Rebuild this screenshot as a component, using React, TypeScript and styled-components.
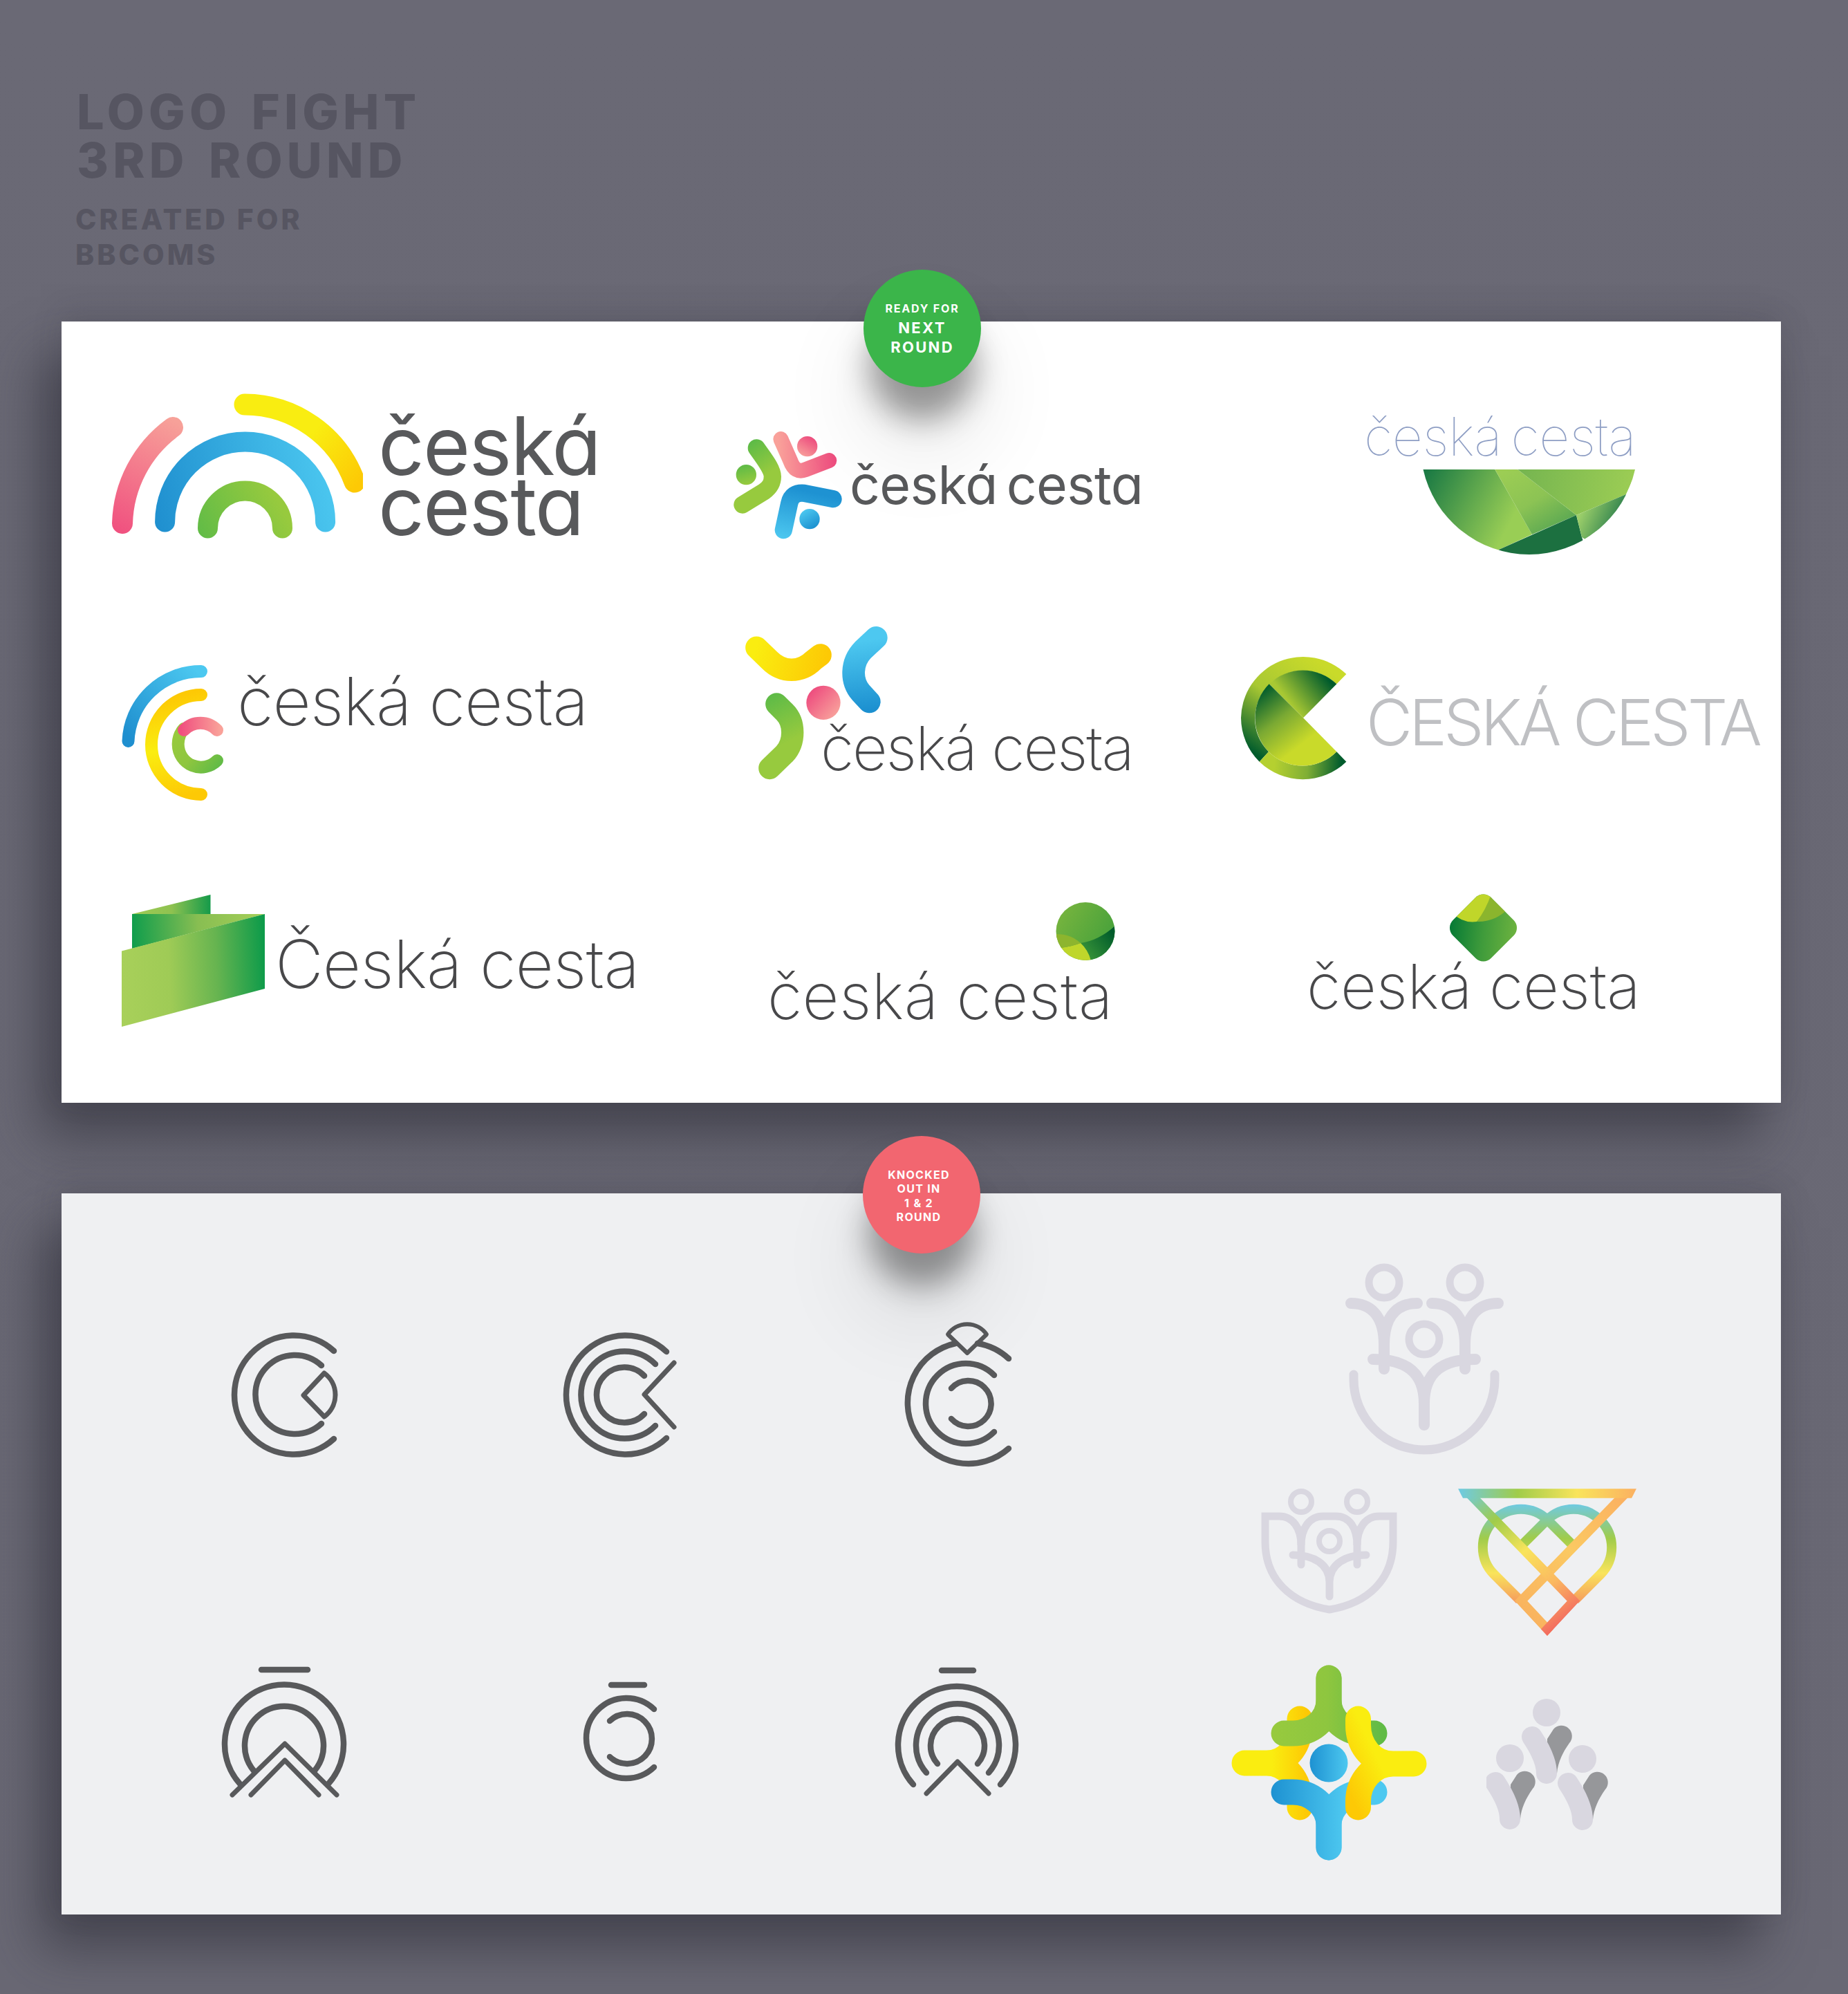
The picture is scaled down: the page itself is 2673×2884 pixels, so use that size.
import React from "react";
import styled, { createGlobalStyle } from "styled-components";

const GlobalStyle = createGlobalStyle`
  body {
    margin: 0;
    background: #696874;
    font-family: "Inter", "Liberation Sans", sans-serif;
  }
`;

const Page = styled.div`
  width: 2673px;
  height: 2884px;
  overflow: hidden;
  padding: 127px 0 0 89px;
  box-sizing: border-box;
  background: linear-gradient(180deg, #6a6975 0%, #696874 100%);
`;

const Header = styled.header`
  height: 338px;
  color: #565561;
`;

const Title = styled.h1`
  margin: 0 0 0 22px;
  font-size: 70px;
  line-height: 70px;
  font-weight: 800;
  letter-spacing: 6.2px;
  word-spacing: 8px;
`;

const Subtitle = styled.h2`
  margin: 25px 0 0 20px;
  font-size: 41px;
  line-height: 51px;
  font-weight: 800;
  letter-spacing: 4px;
`;

const Panel = styled.section<{ $tone: string; $height: number; $top: number }>`
  position: relative;
  width: 2487px;
  height: ${({ $height }) => $height}px;
  margin-top: ${({ $top }) => $top}px;
  background: ${({ $tone }) => $tone};
  box-shadow: 0 -10px 40px rgba(50, 49, 60, 0.18), -30px 50px 70px rgba(45, 44, 55, 0.58);
`;

const LogoGrid = styled.div`
  display: grid;
  grid-template-columns: 900px 760px 827px;
  grid-template-rows: 400px 370px 360px;
`;

const MarkGrid = styled.div`
  display: grid;
  grid-template-columns: 721px 459px 479px 828px;
  grid-template-rows: 660px 383px;
`;

const Cell = styled.div<{ $left: number; $top: number; $stack?: boolean }>`
  display: flex;
  flex-direction: ${({ $stack }) => ($stack ? "column" : "row")};
  align-items: flex-start;
  padding: ${({ $top, $left }) => `${$top}px 0 0 ${$left}px`};
`;

const Mark = styled.svg<{ $ml?: number; $mt?: number }>`
  display: block;
  flex-shrink: 0;
  margin: ${({ $mt = 0, $ml = 0 }) => `${$mt}px 0 0 ${$ml}px`};
`;

const Word = styled.div<{
  $size: number;
  $weight: number;
  $tone?: string;
  $ml?: number;
  $mt?: number;
  $track?: number;
  $gap?: number;
  $round?: boolean;
  $leading?: number;
}>`
  flex-shrink: 0;
  white-space: pre;
  font-family: "Inter", "Liberation Sans", sans-serif;
  font-size: ${({ $size }) => $size}px;
  font-weight: ${({ $weight }) => $weight};
  line-height: ${({ $leading, $size }) => $leading ?? $size}px;
  letter-spacing: ${({ $track = 0 }) => $track}px;
  word-spacing: ${({ $gap = 0 }) => $gap}px;
  color: ${({ $tone = "#48484a" }) => $tone};
  margin: ${({ $mt = 0, $ml = 0 }) => `${$mt}px 0 0 ${$ml}px`};
  font-feature-settings: ${({ $round }) => ($round ? '"cv11" 1' : "normal")};
`;

const RightColumn = styled.div`
  grid-column: 4;
  grid-row: 1 / span 2;
  display: flex;
  flex-direction: column;
`;

const MarkRow = styled.div<{ $top: number }>`
  display: flex;
  align-items: flex-start;
  margin-top: ${({ $top }) => $top}px;
`;

const Badge = styled.div<{
  $tone: string;
  $left: number;
  $top: number;
  $leading: number;
  $shift?: number;
  $above?: number;
  $below?: number;
  $track: number;
}>`
  position: absolute;
  left: ${({ $left }) => $left}px;
  top: ${({ $top }) => $top}px;
  width: 170px;
  height: 170px;
  box-sizing: border-box;
  padding: ${({ $above = 0, $below = 0, $shift = 0 }) => `${$above}px ${$shift}px ${$below}px 0`};
  border-radius: 50%;
  background: ${({ $tone }) => $tone};
  color: #fff;
  display: flex;
  flex-direction: column;
  align-items: center;
  justify-content: center;
  font-size: 16px;
  font-weight: 700;
  letter-spacing: ${({ $track }) => $track}px;
  line-height: ${({ $leading }) => $leading}px;
  box-shadow: 0 55px 45px -8px rgba(0, 0, 0, 0.38), 0 90px 120px 15px rgba(0, 0, 0, 0.08);
`;

const BadgeStrong = styled.span`
  font-size: 22px;
  letter-spacing: 2.3px;
`;

const Path = styled.path<{ $w: number; $c: string }>`
  fill: none;
  stroke: ${({ $c }) => $c};
  stroke-width: ${({ $w }) => $w};
  stroke-linecap: round;
  stroke-linejoin: round;
`;

const ButtPath = styled.path<{ $w: number; $c: string }>`
  fill: none;
  stroke: ${({ $c }) => $c};
  stroke-width: ${({ $w }) => $w};
  stroke-linejoin: miter;
`;

type GradProps = { id: string; x1: number; y1: number; x2: number; y2: number; stops: string[] };

const Grad = ({ id, x1, y1, x2, y2, stops }: GradProps) => (
  <linearGradient id={id} gradientUnits="userSpaceOnUse" x1={x1} y1={y1} x2={x2} y2={y2}>
    {stops.map((c, i) => (
      <stop key={i} offset={stops.length === 1 ? 0 : i / (stops.length - 1)} stopColor={c} />
    ))}
  </linearGradient>
);

const ink = "#58595b";
const lilac = "#d9d7e0";

const RainbowMark = () => (
  <Mark viewBox="155 560 370 230" width={370} height={230}>
    <defs>
      <Grad id="rb-pink" x1={170} y1={770} x2={255} y2={610} stops={["#f0507f", "#f7a199"]} />
      <Grad id="rb-yellow" x1={360} y1={580} x2={510} y2={710} stops={["#f9ed11", "#f9ed11", "#fdc905"]} />
      <Grad id="rb-blue" x1={225} y1={760} x2={486} y2={700} stops={["#1f8fcf", "#4cc8f0"]} />
      <Grad id="rb-green" x1={286} y1={780} x2={400} y2={720} stops={["#5fbb47", "#97ca3e"]} />
    </defs>
    <Path $w={30} $c="url(#rb-pink)" d="M177 757 A178 178 0 0 1 250 618" />
    <Path $w={31} $c="url(#rb-yellow)" d="M354 585 A170 170 0 0 1 513 697" />
    <Path $w={29} $c="url(#rb-blue)" d="M238.6 755 A116 116 0 0 1 470.6 755" />
    <Path $w={29} $c="url(#rb-green)" d="M300.5 764 A54 54 0 0 1 408.5 764" />
  </Mark>
);

const PeopleMark = () => (
  <Mark viewBox="0 0 540 540" width={180} height={180}>
    <defs>
      <Grad id="pm-pink" x1={230} y1={180} x2={470} y2={170} stops={["#f9a19a", "#ee4e7f"]} />
      <Grad id="pm-pinkdot" x1={375} y1={70} x2={330} y2={150} stops={["#ee4e7f", "#f8a09b"]} />
      <Grad id="pm-green" x1={110} y1={90} x2={190} y2={220} stops={["#5ebb47", "#97ca3e"]} />
      <Grad id="pm-greendot" x1={80} y1={190} x2={100} y2={270} stops={["#60bb46", "#97ca3e"]} />
      <Grad id="pm-blue" x1={300} y1={290} x2={250} y2={510} stops={["#1e92d2", "#4dc8f0"]} />
      <Grad id="pm-bluedot" x1={340} y1={385} x2={385} y2={460} stops={["#4bc6ef", "#1c91d0"]} />
    </defs>
    <Path $w={66} $c="url(#pm-pink)" d="M238 75 L280 170 Q300 225 345 208 L448 168" />
    <circle cx={353} cy={107} r={44} fill="url(#pm-pinkdot)" />
    <Path $w={76} $c="url(#pm-green)" d="M133 114 C165 160 202 205 202 238 C202 268 190 285 165 303 L72 360" />
    <circle cx={88} cy={230} r={44} fill="url(#pm-greendot)" />
    <Path $w={76} $c="url(#pm-blue)" d="M250 470 L275 355 Q285 305 340 310 L465 335" />
    <circle cx={363} cy={422} r={44} fill="url(#pm-bluedot)" />
  </Mark>
);

const LeafMark = () => (
  <Mark viewBox="2055 675 315 130" width={315} height={130} $ml={82} $mt={5}>
    <defs>
      <clipPath id="leaf-clip">
        <path d="M2058.5 679 A157 157 0 0 0 2365 679 Z" />
      </clipPath>
      <Grad id="leaf-a" x1={2065} y1={680} x2={2190} y2={745} stops={["#1b7a44", "#99ce55"]} />
      <Grad id="leaf-b" x1={2180} y1={680} x2={2240} y2={780} stops={["#9ccd54", "#8cc354", "#55a552"]} />
      <Grad id="leaf-c" x1={2190} y1={690} x2={2360} y2={720} stops={["#74b450", "#9ccd54"]} />
      <Grad id="leaf-e" x1={2285} y1={745} x2={2340} y2={770} stops={["#9ccf6a", "#22784a"]} />
    </defs>
    <g clipPath="url(#leaf-clip)">
      <polygon points="2050,675 2160,675 2216,773 2168,795 2168,810 2050,810" fill="url(#leaf-a)" />
      <polygon points="2160,675 2190,675 2280,745 2216,773" fill="url(#leaf-b)" />
      <polygon points="2190,675 2370,675 2352,715 2280,745" fill="url(#leaf-c)" />
      <polygon points="2280,745 2168,795 2168,810 2300,810 2288,777" fill="#1c7040" />
      <polygon points="2280,745 2352,715 2340,810 2288,777" fill="url(#leaf-e)" />
    </g>
  </Mark>
);

const RingsMark = () => (
  <Mark viewBox="170 960 160 200" width={160} height={200}>
    <defs>
      <Grad id="ri-blue" x1={190} y1={1070} x2={290} y2={975} stops={["#1f8fcf", "#4cc8f0"]} />
      <Grad id="ri-yellow" x1={240} y1={1010} x2={270} y2={1150} stops={["#fdc905", "#faed10", "#fdc905"]} />
      <Grad id="ri-green" x1={255} y1={1060} x2={315} y2={1110} stops={["#97ca3e", "#8fc63f", "#62bb46"]} />
      <Grad id="ri-pink" x1={262} y1={1050} x2={318} y2={1050} stops={["#f0507f", "#f9a199"]} />
    </defs>
    <Path $w={18} $c="url(#ri-blue)" d="M185.5 1072 A105 105 0 0 1 291 971" />
    <Path $w={18} $c="url(#ri-yellow)" d="M291 1005 A72 72 0 0 0 291 1149" />
    <Path $w={18} $c="url(#ri-green)" d="M266 1054 A33 33 0 0 0 257.7 1077 A33 33 0 0 0 314 1100" />
    <Path $w={18} $c="url(#ri-pink)" d="M266 1056 A33 33 0 0 1 314 1056" />
  </Mark>
);

const BlobsMark = () => (
  <Mark viewBox="0 0 720 720" width={240} height={240}>
    <defs>
      <Grad id="bl-yellow" x1={100} y1={140} x2={400} y2={220} stops={["#faed10", "#fdc905"]} />
      <Grad id="bl-blue" x1={560} y1={110} x2={600} y2={410} stops={["#4dc8f0", "#1c90d0"]} />
      <Grad id="bl-green" x1={170} y1={350} x2={260} y2={540} stops={["#5fbb47", "#97ca3e"]} />
      <Grad id="bl-pink" x1={340} y1={330} x2={450} y2={430} stops={["#ee4e7f", "#f8a09b"]} />
    </defs>
    <Path $w={97} $c="url(#bl-yellow)" d="M103 140 L160 195 C215 250 295 250 350 195 L380 172" />
    <Path $w={98} $c="url(#bl-blue)" d="M622 97 L565 150 C512 205 512 285 555 335 L592 375" />
    <Path $w={97} $c="url(#bl-green)" d="M190 385 L225 420 C270 465 270 550 225 600 L160 663" />
    <circle cx={393} cy={379} r={74} fill="url(#bl-pink)" />
  </Mark>
);

const PacmanMark = () => (
  <Mark viewBox="0 0 600 600" width={200} height={200}>
    <defs>
      <Grad id="pc-ring" x1={380} y1={80} x2={90} y2={470} stops={["#c9da2a", "#a8c833", "#005b2c"]} />
      <Grad id="pc-foot" x1={190} y1={520} x2={480} y2={540} stops={["#b5d030", "#7fae35", "#005b2c"]} />
      <Grad id="pc-top" x1={250} y1={250} x2={400} y2={130} stops={["#a8c833", "#005b2c"]} />
      <Grad id="pc-low" x1={140} y1={200} x2={320} y2={430} stops={["#005b2c", "#7aa933", "#c9da2a"]} />
    </defs>
    <path d="M502 135 A270 270 0 0 0 45 325 A270 270 0 0 0 125 515 L165 472 A210 210 0 0 1 105 325 A210 210 0 0 1 460 178 Z" fill="url(#pc-ring)" />
    <path d="M125 515 A270 270 0 0 0 502 515 L460 472 A210 210 0 0 1 165 472 Z" fill="url(#pc-foot)" />
    <path d="M315 325 L167 178 A210 210 0 0 1 460 178 Z" fill="url(#pc-top)" />
    <path d="M315 325 L167 178 A210 210 0 0 0 165 472 A210 210 0 0 0 460 472 Z" fill="url(#pc-low)" />
  </Mark>
);

const FoldMark = () => (
  <Mark viewBox="170 1290 220 200" width={220} height={200}>
    <defs>
      <Grad id="fo-back" x1={191} y1={1310} x2={305} y2={1310} stops={["#9fcb55", "#8fc250", "#149a4a"]} />
      <Grad id="fo-mid" x1={191} y1={1350} x2={383} y2={1340} stops={["#0f9d4c", "#88be52", "#a6cf58"]} />
      <Grad id="fo-front" x1={176} y1={1410} x2={383} y2={1400} stops={["#a8d05a", "#9fcb56", "#66b450", "#0e9b4a"]} />
    </defs>
    <polygon points="191,1322 304.5,1294 304.5,1322" fill="url(#fo-back)" />
    <polygon points="191,1322 383,1322 191,1372" fill="url(#fo-mid)" />
    <polygon points="176,1375.5 383,1322 383,1430 176,1485" fill="url(#fo-front)" />
  </Mark>
);

const BallMark = () => (
  <Mark viewBox="1525 1303 90 90" width={90} height={90} $ml={415}>
    <defs>
      <clipPath id="ball-clip">
        <ellipse cx={1570} cy={1347} rx={42.5} ry={42} />
      </clipPath>
      <Grad id="ba-base" x1={1535} y1={1315} x2={1612} y2={1360} stops={["#76b43e", "#45a03b"]} />
      <Grad id="ba-dark" x1={1565} y1={1385} x2={1610} y2={1350} stops={["#3f9a3a", "#005c2b"]} />
    </defs>
    <g clipPath="url(#ball-clip)">
      <rect x={1525} y={1303} width={90} height={90} fill="url(#ba-base)" />
      <path d="M1563 1364 Q1590 1360 1614 1338 L1614 1392 L1578 1392 Q1575 1375 1563 1364 Z" fill="url(#ba-dark)" />
      <path d="M1534 1371 Q1550 1369 1563 1364 Q1575 1375 1578.5 1392 L1530 1392 Z" fill="#bfd62b" />
      <path d="M1525 1351 Q1548 1350 1563 1364 Q1550 1369 1534 1371 Z" fill="#8db52e" />
    </g>
  </Mark>
);

const DiamondMark = () => (
  <Mark viewBox="2090 1290 110 105" width={110} height={105} $ml={200}>
    <defs>
      <clipPath id="dia-clip">
        <rect x={-39} y={-39} width={78} height={78} rx={16} transform="translate(2145.5 1342) rotate(45)" />
      </clipPath>
      <Grad id="di-base" x1={2097} y1={1340} x2={2194} y2={1350} stops={["#067a35", "#3f9b3b", "#6db33f"]} />
    </defs>
    <g clipPath="url(#dia-clip)">
      <rect x={2090} y={1290} width={110} height={105} fill="url(#di-base)" />
      <path d="M2100 1320 Q2116 1336 2136 1333 Q2150 1320 2158 1290 L2100 1290 Z" fill="#c0d62a" />
      <path d="M2136 1333 Q2162 1334 2182 1314 L2165 1290 L2158 1290 Q2150 1315 2136 1333 Z" fill="#8bb52d" />
    </g>
  </Mark>
);

const DiamondRingMark = () => (
  <Mark viewBox="330 1920 165 195" width={165} height={195}>
    <Path $w={8.5} $c={ink} d="M483 1954 A86 86 0 1 0 483 2081" />
    <Path $w={8.5} $c={ink} d="M465 1975 A57 57 0 1 0 465 2059" />
    <Path $w={7} $c={ink} d="M469 1986 L439 2018 L469 2049 A39 39 0 0 0 469 1986 Z" />
  </Mark>
);

const TripleRingMark = () => (
  <Mark viewBox="810 1920 175 195" width={175} height={195}>
    <Path $w={8.5} $c={ink} d="M964 1955 A86 86 0 1 0 964 2080" />
    <Path $w={8.5} $c={ink} d="M948 1973 A63 63 0 1 0 948 2062" />
    <Path $w={8.5} $c={ink} d="M932 1990 A40 40 0 1 0 932 2045" />
    <Path $w={7} $c={ink} d="M975 1971 L932 2017 L975 2064" />
  </Mark>
);

const JewelMark = () => (
  <Mark viewBox="1300 1905 170 225" width={170} height={225}>
    <Path $w={8.5} $c={ink} d="M1382 1942 A88 88 0 1 0 1459 2094" />
    <Path $w={8.5} $c={ink} d="M1414 1942 A88 88 0 0 1 1459 1964" />
    <Path $w={8.5} $c={ink} d="M1438 1988 A58 58 0 1 0 1438 2070" />
    <Path $w={8.5} $c={ink} d="M1376 2007 A33 33 0 1 1 1376 2051" />
    <Path $w={6} $c={ink} d="M1399 1956 L1371 1929 A34 34 0 0 1 1427 1929 Z" />
  </Mark>
);

const RoofMark = () => (
  <Mark viewBox="315 2405 195 200" width={195} height={200}>
    <Path $w={8.5} $c={ink} d="M378 2415 H445" />
    <Path $w={8.5} $c={ink} d="M347 2580 A86 86 0 1 1 475 2580" />
    <Path $w={8.5} $c={ink} d="M367 2561 A57 57 0 1 1 455 2561" />
    <Path $w={7} $c={ink} d="M336 2596 L412 2522 L487 2596" />
    <Path $w={7} $c={ink} d="M363 2596 L412 2546 L461 2596" />
  </Mark>
);

const SmallRingMark = () => (
  <Mark viewBox="840 2430 115 155" width={115} height={155}>
    <Path $w={8.5} $c={ink} d="M884 2437 H932" />
    <Path $w={8.5} $c={ink} d="M946 2472 A58 58 0 1 0 946 2556" />
    <Path $w={8.5} $c={ink} d="M882 2489 A36 36 0 1 1 882 2541" />
  </Mark>
);

const ArchMark = () => (
  <Mark viewBox="1290 2405 190 200" width={190} height={200}>
    <Path $w={8.5} $c={ink} d="M1362 2416 H1408" />
    <Path $w={8.5} $c={ink} d="M1321 2581 A85 85 0 1 1 1447 2581" />
    <Path $w={8.5} $c={ink} d="M1340 2564 A60 60 0 1 1 1430 2564" />
    <Path $w={8.5} $c={ink} d="M1356 2551 A39 39 0 1 1 1414 2551" />
    <Path $w={7} $c={ink} d="M1340 2594 L1385 2548 L1430 2594" />
  </Mark>
);

const FamilyMark = () => (
  <Mark viewBox="1945 1825 230 285" width={230} height={285} $ml={197} $mt={99}>
    <circle cx={2002} cy={1855} r={22} fill="none" stroke={lilac} strokeWidth={11} />
    <circle cx={2119} cy={1855} r={22} fill="none" stroke={lilac} strokeWidth={11} />
    <circle cx={2060} cy={1937} r={22} fill="none" stroke={lilac} strokeWidth={11} />
    <Path $w={16} $c={lilac} d="M1954 1885 C1980 1885 2002 1900 2002 1945 V1980 M2050 1885 C2024 1885 2002 1900 2002 1945" />
    <Path $w={16} $c={lilac} d="M2071 1885 C2097 1885 2119 1900 2119 1945 V1980 M2167 1885 C2141 1885 2119 1900 2119 1945" />
    <Path $w={16} $c={lilac} d="M1986 1966 C2030 1966 2060 1982 2060 2030 V2061 M2134 1966 C2090 1966 2060 1982 2060 2030" />
    <Path $w={13} $c={lilac} d="M1958 1988 V1995 A102 102 0 0 0 2162 1995 V1988" />
  </Mark>
);

const ShieldMark = () => (
  <Mark viewBox="1820 2150 205 195" width={205} height={195} $ml={72}>
    <circle cx={1882} cy={2172} r={15} fill="none" stroke={lilac} strokeWidth={8} />
    <circle cx={1963} cy={2172} r={15} fill="none" stroke={lilac} strokeWidth={8} />
    <circle cx={1923} cy={2229} r={15} fill="none" stroke={lilac} strokeWidth={8} />
    <Path $w={11} $c={lilac} d="M1882 2263 V2235 C1882 2210 1894 2193 1914 2193 H1932 C1952 2193 1963 2210 1963 2235 V2263" />
    <ButtPath $w={11} $c={lilac} d="M1882 2235 C1882 2210 1870 2193 1850 2193 H1830 V2230 C1830 2285 1868 2319 1923 2328 C1978 2319 2015 2285 2015 2230 V2193 H1995 C1975 2193 1963 2210 1963 2235" />
    <Path $w={11} $c={lilac} d="M1870 2249 C1900 2249 1923 2262 1923 2289 V2309 M1976 2249 C1946 2249 1923 2262 1923 2289" />
  </Mark>
);

const HeartMark = () => (
  <Mark viewBox="2105 2150 265 220" width={265} height={220} $ml={80}>
    <defs>
      <clipPath id="hrt-clip">
        <polygon points="2109,2153 2367,2153 2285.5,2315 2238,2366 2190.5,2315" />
      </clipPath>
      <Grad id="hr-bar" x1={2109} y1={2160} x2={2367} y2={2160} stops={["#6ecae4", "#a0cc4a", "#f9e45b", "#fbb061"]} />
      <Grad id="hr-left" x1={2120} y1={2155} x2={2265} y2={2350} stops={["#6ecae4", "#a0cc4a", "#f9e45b", "#fbb961", "#f2655f"]} />
      <Grad id="hr-right" x1={2350} y1={2160} x2={2200} y2={2330} stops={["#fbb061", "#fbc962", "#f9b35f"]} />
      <Grad id="hr-lobe" x1={2200} y1={2175} x2={2200} y2={2325} stops={["#6ecae4", "#a0cc4a", "#f9e45b", "#f58e5e"]} />
    </defs>
    <ButtPath $w={14} $c="url(#hr-lobe)" d="M2198 2314 L2161 2277 A55 55 0 1 1 2239 2199 L2274 2234" />
    <ButtPath $w={14} $c="url(#hr-lobe)" d="M2278 2314 L2315 2277 A55 55 0 1 0 2237 2199 L2202 2234" />
    <g clipPath="url(#hrt-clip)">
      <ButtPath $w={13.5} $c="url(#hr-right)" d="M2351 2160 L2200 2315.5 L2248 2367" />
      <ButtPath $w={13.5} $c="url(#hr-left)" d="M2125 2160 L2276 2315.5 L2228 2367" />
      <ButtPath $w={13.5} $c="url(#hr-bar)" d="M2100 2160 H2376" />
    </g>
  </Mark>
);

const FlowerMark = () => (
  <Mark viewBox="1775 2400 295 300" width={295} height={300} $ml={27}>
    <defs>
      <Grad id="fl-yl" x1={1790} y1={2550} x2={1890} y2={2550} stops={["#faed10", "#faed10", "#fdc905"]} />
      <Grad id="fl-yl2" x1={2060} y1={2550} x2={1955} y2={2600} stops={["#faed10", "#faed10", "#fdc905"]} />
      <Grad id="fl-gr" x1={1840} y1={2500} x2={2000} y2={2500} stops={["#97ca3e", "#8ec63f", "#60bb46"]} />
      <Grad id="fl-bl" x1={1840} y1={2600} x2={1945} y2={2600} stops={["#1e92d2", "#4dc8f0"]} />
      <Grad id="fl-dot" x1={1895} y1={2550} x2={1950} y2={2550} stops={["#1e92d2", "#4dc8f0"]} />
    </defs>
    <Path $w={37} $c="url(#fl-yl)" d="M1800 2550 H1832 C1862 2550 1880 2525 1880 2495 V2486 M1832 2550 C1862 2550 1880 2575 1880 2605 V2614" />
    <Path $w={37} $c="url(#fl-gr)" d="M1922 2427 V2458 C1922 2490 1950 2507 1975 2507 H1988" />
    <Path $w={37} $c="url(#fl-gr)" d="M1922 2427 V2458 C1922 2490 1895 2507 1870 2507 H1857" />
    <Path $w={37} $c="url(#fl-bl)" d="M1922 2672 V2640 C1922 2610 1950 2592 1975 2592 H1988" />
    <Path $w={37} $c="url(#fl-bl)" d="M1922 2672 V2640 C1922 2610 1895 2592 1870 2592 H1857" />
    <circle cx={1922} cy={2550} r={27.5} fill="url(#fl-dot)" />
    <Path $w={37} $c="url(#fl-yl2)" d="M2045 2551 H2015 C1985 2551 1964.5 2525 1964.5 2495 V2486 M2015 2551 C1985 2551 1964.5 2577 1964.5 2605 V2614" />
  </Mark>
);

const Figure = ({ dx, dy }: { dx: number; dy: number }) => (
  <g transform={`translate(${dx} ${dy})`}>
    <circle cx={2237} cy={2477} r={20} fill={lilac} />
    <path d="M2238 2515 L2247 2501 A14.5 14.5 0 0 1 2270 2521 C2260 2535 2253 2550 2252 2565 L2237 2565 Z" fill="#96979a" />
    <Path $w={30} $c={lilac} d="M2216 2512 C2228 2530 2237 2548 2237 2565" />
  </g>
);

const CrowdMark = () => (
  <Mark viewBox="2150 2450 185 205" width={185} height={205} $ml={80} $mt={50}>
    <Figure dx={0} dy={0} />
    <Figure dx={-53} dy={66} />
    <Figure dx={52} dy={67} />
  </Mark>
);

const App = (): JSX.Element => {
  return (
    <>
      <GlobalStyle />
      <Page>
        <Header>
          <Title>
            LOGO FIGHT
            <br />
            3RD ROUND
          </Title>
          <Subtitle>
            CREATED FOR
            <br />
            BBCOMS
          </Subtitle>
        </Header>

        <Panel $tone="#ffffff" $height={1130} $top={0}>
          <Badge $tone="#3bb54a" $left={1160} $top={-75} $leading={28} $below={3} $track={1.8}>
            <span>READY FOR</span>
            <BadgeStrong>NEXT</BadgeStrong>
            <BadgeStrong>ROUND</BadgeStrong>
          </Badge>
          <LogoGrid>
            <Cell $left={66} $top={95}>
              <RainbowMark />
              <Word $size={117} $weight={400} $tone="#58595b" $ml={22} $mt={41} $leading={87} $track={-1.8} $round>
                {"česká\ncesta"}
              </Word>
            </Cell>
            <Cell $left={61} $top={145}>
              <PeopleMark />
              <Word $size={77} $weight={400} $tone="#58595b" $ml={-1} $mt={53} $track={-0.7} $gap={-8} $round>
                česká cesta
              </Word>
            </Cell>
            <Cell $left={224} $top={128} $stack>
              <Word $size={77} $weight={100} $tone="#8e9ec4" $track={-0.4} $gap={-8}>
                česká cesta
              </Word>
              <LeafMark />
            </Cell>

            <Cell $left={81} $top={95}>
              <RingsMark />
              <Word $size={96} $weight={200} $ml={13} $mt={6} $track={-1}>
                česká cesta
              </Word>
            </Cell>
            <Cell $left={71} $top={25}>
              <BlobsMark />
              <Word $size={88} $weight={200} $ml={-113} $mt={148} $track={-2.1}>
                česká cesta
              </Word>
            </Cell>
            <Cell $left={31} $top={65}>
              <PacmanMark />
              <Word $size={92} $weight={300} $tone="#bfc0c3" $ml={-4} $mt={69} $track={-4.7}>
                ČESKÁ CESTA
              </Word>
            </Cell>

            <Cell $left={81} $top={55}>
              <FoldMark />
              <Word $size={96} $weight={200} $ml={8} $mt={56} $track={-0.8}>
                Česká cesta
              </Word>
            </Cell>
            <Cell $left={121} $top={68} $stack>
              <BallMark />
              <Word $size={92} $weight={200} $mt={2} $track={0.3}>
                česká cesta
              </Word>
            </Cell>
            <Cell $left={141} $top={55} $stack>
              <DiamondMark />
              <Word $size={90} $weight={200} $mt={-13} $track={-0.3}>
                česká cesta
              </Word>
            </Cell>
          </LogoGrid>
        </Panel>

        <Panel $tone="#eff0f2" $height={1043} $top={131}>
          <Badge $tone="#f26670" $left={1159} $top={-83} $leading={20.5} $shift={8} $above={3} $track={1.3}>
            <span>KNOCKED</span>
            <span>OUT IN</span>
            <span>1 &amp; 2</span>
            <span>ROUND</span>
          </Badge>
          <MarkGrid>
            <Cell $left={241} $top={194}>
              <DiamondRingMark />
            </Cell>
            <Cell $left={0} $top={194}>
              <TripleRingMark />
            </Cell>
            <Cell $left={31} $top={180}>
              <JewelMark />
            </Cell>
            <RightColumn>
              <FamilyMark />
              <MarkRow $top={40}>
                <ShieldMark />
                <HeartMark />
              </MarkRow>
              <MarkRow $top={30}>
                <FlowerMark />
                <CrowdMark />
              </MarkRow>
            </RightColumn>
            <Cell $left={226} $top={19}>
              <RoofMark />
            </Cell>
            <Cell $left={30} $top={44}>
              <SmallRingMark />
            </Cell>
            <Cell $left={21} $top={19}>
              <ArchMark />
            </Cell>
          </MarkGrid>
        </Panel>
      </Page>
    </>
  );
};

export default App;
